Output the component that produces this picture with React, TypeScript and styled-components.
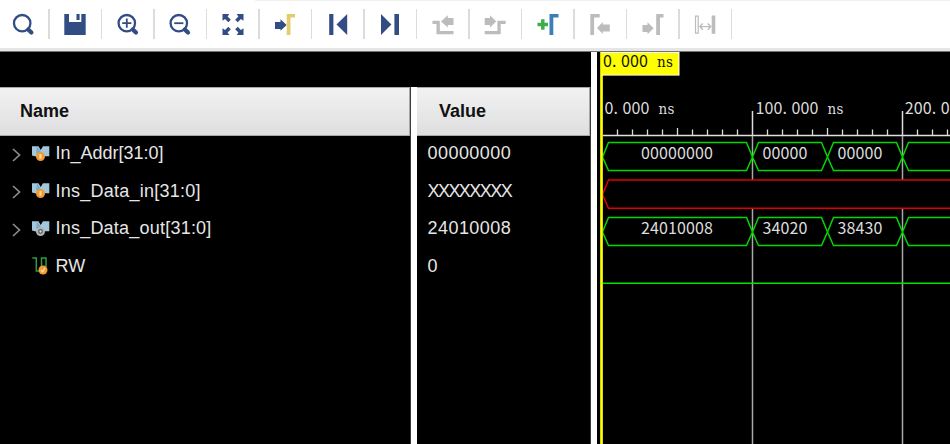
import React from "react";
import styled, { createGlobalStyle } from "styled-components";

const GlobalStyle = createGlobalStyle`
  html, body { margin: 0; padding: 0; background: #000; overflow: hidden; }
  * { box-sizing: border-box; }
`;

const NAVY = "#324d84";
const GRAY = "#bcbcbc";

const Page = styled.div`
  width: 950px;
  height: 444px;
  display: flex;
  flex-direction: column;
  background: #000;
  font-family: "Liberation Sans", Arial, sans-serif;
`;

const Toolbar = styled.div`
  height: 52px;
  flex: none;
  display: flex;
  flex-direction: column;
  background: #fff;
  border-bottom: 1px solid #747474;
`;

const TopEdge = styled.div`
  height: 1px;
  margin-left: 255px;
  background: #f0f0f0;
`;

const ToolRow = styled.div`
  height: 47px;
  display: flex;
  align-items: center;
  padding: 0 0 1px 10.5px;
`;

const BottomEdge = styled.div`
  height: 3px;
  background: #e6e6e6;
`;

const ToolButton = styled.button`
  border: 0;
  padding: 0;
  background: none;
  width: 24px;
  height: 24px;
  display: block;
  flex: none;
  svg { display: block; }
`;

const Divider = styled.span`
  width: 1.5px;
  height: 30px;
  margin: 0 13.5px;
  background: #dcdcdc;
  flex: none;
`;

const Workspace = styled.div`
  flex: 1;
  min-height: 0;
  display: flex;
`;

const SignalPane = styled.div`
  width: 591px;
  display: flex;
  flex-direction: column;
  flex: none;
`;

const Columns = styled.div`
  flex: 1;
  margin-top: 35px;
  display: flex;
`;

const Column = styled.div<{ $width: number }>`
  width: ${(p) => p.$width}px;
  flex: none;
  border-right: 1px solid #3c3c3c;
`;

const Splitter = styled.div`
  width: 6px;
  flex: none;
  background: #fff;
`;

const Header = styled.div<{ $indent: number }>`
  height: 49px;
  padding: 0 0 0 ${(p) => p.$indent}px;
  display: flex;
  align-items: center;
  background: linear-gradient(#f2f2f2, #dedee0);
  border: 1px solid #a8a8a8;
  border-left: 0;
  color: #111;
  font-size: 18px;
  font-weight: bold;
`;

const Row = styled.div<{ $indent: number }>`
  height: 37.5px;
  padding: 0 0 2px ${(p) => p.$indent}px;
  display: flex;
  align-items: center;
  color: #e6e6e6;
  font-size: 18px;
  white-space: pre;
`;

const Caret = styled.span`
  width: 20px;
  height: 20px;
  flex: none;
  svg { display: block; }
`;

const Glyph = styled.span`
  width: 23.5px;
  height: 20px;
  flex: none;
  svg { display: block; }
`;

const Label = styled.span<{ $spacing: number }>`
  letter-spacing: ${(p) => p.$spacing}px;
`;

const WavePane = styled.div`
  width: 353px;
  height: 392px;
  flex: none;
  svg { display: block; }
`;

const Bracket = ({ x, r, c }: { x: number; r: number; c: string }) => (
  <path d={`M${x} 2H${r}V5.6H${x + 3.8}V23H${x}Z`} fill={c} />
);

const icons: { name: string; art: React.ReactNode }[] = [
  {
    name: "Search",
    art: (
      <g fill="none" stroke={NAVY}>
        <circle cx="11.2" cy="11.2" r="8.2" strokeWidth="2.3" />
        <path d="M17.2 17.4L20.4 20.6" strokeWidth="4.2" strokeLinecap="round" />
      </g>
    ),
  },
  {
    name: "Save",
    art: <path d="M1.3 2H6V10H18.3V2H22.7V23H1.3ZM13.5 2H16.6V8H13.5Z" fill={NAVY} />,
  },
  {
    name: "Zoom in",
    art: (
      <g fill="none" stroke={NAVY}>
        <circle cx="10.8" cy="11.2" r="8.2" strokeWidth="2.3" />
        <path d="M16.8 17.4L20 20.6" strokeWidth="4.2" strokeLinecap="round" />
        <path d="M6.2 11.2H15.4M10.8 6.6V15.8" strokeWidth="1.8" />
      </g>
    ),
  },
  {
    name: "Zoom out",
    art: (
      <g fill="none" stroke={NAVY}>
        <circle cx="10.8" cy="11.2" r="8.2" strokeWidth="2.3" />
        <path d="M16.8 17.4L20 20.6" strokeWidth="4.2" strokeLinecap="round" />
        <path d="M6.2 11.2H15.4" strokeWidth="1.8" />
      </g>
    ),
  },
  {
    name: "Zoom fit",
    art: (
      <g fill={NAVY}>
        {[0, 90, 180, 270].map((a) => (
          <path
            key={a}
            transform={`rotate(${a} 12 12.5)`}
            d="M1.5 2H8.3L6.6 4.6L9.8 7.8L7.3 10.3L4.1 7.1L1.5 8.8Z"
          />
        ))}
      </g>
    ),
  },
  {
    name: "Go to cursor",
    art: (
      <>
        <path d="M2 10H7.5V7.2L13.7 13L7.5 18.8V17H2Z" fill={NAVY} />
        <Bracket x={13.7} r={22} c="#e3cd6a" />
      </>
    ),
  },
  { name: "Go to start", art: <path d="M3.2 2H7.4V23H3.2ZM21.2 2V23L10.5 12.5Z" fill={NAVY} /> },
  { name: "Go to end", art: <path d="M3 2L13.4 12.5L3 23ZM16.4 2H21V23H16.4Z" fill={NAVY} /> },
  {
    name: "Previous transition",
    art: (
      <path
        fill={GRAY}
        d="M1.5 8.8H8.8V19H22.5V22.3H5.5V12H1.5ZM10 9.4L16.8 3.2V6H22.5V13H16.8V15.6Z"
      />
    ),
  },
  {
    name: "Next transition",
    art: (
      <path
        fill={GRAY}
        d="M22.7 8.8H14.4V19H1.7V22.3H17.7V12H22.7ZM13.2 9.4L7 3.2V6H1.7V13H7V15.6Z"
      />
    ),
  },
  {
    name: "Add marker",
    art: (
      <>
        <path d="M1.5 12.5H12M6.8 7.2V17.8" stroke="#3fae49" strokeWidth="3.5" />
        <Bracket x={13.5} r={22.5} c="#3a7fb8" />
      </>
    ),
  },
  {
    name: "Previous marker",
    art: (
      <>
        <Bracket x={2.3} r={11.7} c={GRAY} />
        <path d="M9 16L14.8 10V12.6H21.8V19.6H14.8V22Z" fill={GRAY} />
      </>
    ),
  },
  {
    name: "Next marker",
    art: (
      <>
        <path d="M1.5 12.9H6.5V10.3L12.7 16.3L6.5 22.3V19.9H1.5Z" fill={GRAY} />
        <Bracket x={15.2} r={22.5} c={GRAY} />
      </>
    ),
  },
  {
    name: "Swap cursors",
    art: (
      <g fill="none" stroke={GRAY}>
        <path d="M2.5 4.2H5.2V21.2H2.5Z" strokeWidth="1.2" />
        <path d="M20.5 3.5V21.8" strokeWidth="3.6" />
        <path d="M6.8 14.6H17.8M9.8 11.4L6.8 14.6L9.8 17.8M14.8 11.4L17.8 14.6L14.8 17.8" strokeWidth="1.4" />
      </g>
    ),
  },
];

type Kind = "in" | "out" | "bit";

const SignalIcon = ({ kind }: { kind: Kind }) => (
  <svg width="23.5" height="20" viewBox="0 0 23.5 20">
    {kind === "bit" ? (
      <path d="M0.3 2H4.3V15H9.5V2H14V11" fill="none" stroke="#2f9b45" strokeWidth="1.5" />
    ) : (
      <>
        <path d="M0 2.3H6.5L8.7 6L11 2.3H17.3V12.3H12L8.7 9L5 12.8L0 11.5Z" fill="#a3c8dc" />
        <path d="M5 2.3L8.7 7.5L6 10.5L4 9Z" fill="#7fa8c2" />
      </>
    )}
    <circle
      cx={kind === "bit" ? 11 : 8.5}
      cy={kind === "bit" ? 14 : 12.5}
      r="4.5"
      fill={kind === "out" ? "#b2b4b7" : "#f29a33"}
    />
    {kind === "in" && <path d="M8.5 10V14.6" stroke="#ffe0ac" strokeWidth="2" fill="none" />}
    {kind === "out" && <circle cx="8.5" cy="12.5" r="1.8" stroke="#595e63" strokeWidth="1.3" fill="#ddd" />}
    {kind === "bit" && <path d="M9 14.2L10.7 15.7L13 12" stroke="#ffe0ac" strokeWidth="1.4" fill="none" />}
  </svg>
);

const signals: { name: string; value: string; kind: Kind; gap: number; vgap: number }[] = [
  { name: "In_Addr[31:0]", value: "00000000", kind: "in", gap: 0, vgap: 0.45 },
  { name: "Ins_Data_in[31:0]", value: "XXXXXXXX", kind: "in", gap: 0.25, vgap: -1.55 },
  { name: "Ins_Data_out[31:0]", value: "24010008", kind: "out", gap: 0.22, vgap: 0.45 },
  { name: "RW", value: "0", kind: "bit", gap: 0, vgap: 0 },
];

const CELL = 9;

/* Fixed-pitch text: every character starts on a 9px cell. */
const Mono = ({ x, y, text, color = "#dcdcdc" }: { x: number; y: number; text: string; color?: string }) => (
  <text
    y={y}
    x={[...text].map((_, i) => x + i * CELL).join(" ")}
    fill={color}
    fontSize="16"
    fontFamily='"Noto Sans CJK SC", sans-serif'
  >
    {[...text].map((c, i) =>
      /[a-z]/.test(c) ? (
        <tspan key={i} fontSize="15" fontFamily='"DejaVu Serif Condensed", "DejaVu Serif", serif'>
          {c}
        </tspan>
      ) : (
        c
      )
    )}
  </text>
);

const edges = [602.5, 752.5, 827.5, 902.5, 980];

const Bus = ({ top, values }: { top: number; values: string[] }) => {
  const bottom = top + 28;
  const mid = top + 14.5;
  return (
    <>
      {edges.slice(0, -1).map((s, i) => {
        const e = edges[i + 1];
        return (
          <React.Fragment key={s}>
            <path
              d={`M${s} ${mid}L${s + 6} ${top}H${e - 6}L${e} ${mid}L${e - 6} ${bottom}H${s + 6}Z`}
              fill="#000"
              stroke="#00d800"
              strokeWidth="1.5"
            />
            {values[i] && (
              <Mono x={values[i].length === 8 ? 641 : s + 10} y={top + 16} text={values[i]} />
            )}
          </React.Fragment>
        );
      })}
    </>
  );
};

const Waveform = () => (
  <svg width="353" height="392" viewBox="597 52 353 392">
    <rect x="597" y="52" width="353" height="392" fill="#000" />
    <path d="M603 135.5H950" stroke="#e0e0e0" strokeWidth="1.4" />
    {Array.from({ length: 23 }, (_, i) => i + 1)
      .filter((i) => i % 10 !== 0)
      .map((i) => (
        <path
          key={i}
          d={`M${602.5 + i * 15} ${i % 5 === 0 ? 128 : 129.5}V135`}
          stroke="#dcdcdc"
          strokeWidth="1.3"
        />
      ))}
    {[752.5, 902.5].map((x) => (
      <g key={x} strokeWidth="1.5">
        <path d={`M${x} 111V136`} stroke="#dcdcdc" />
        <path d={`M${x} 136V444`} stroke="#a8a8a8" />
      </g>
    ))}
    <Mono x={604.5} y={114.3} text="0.000 ns" />
    <Mono x={755.5} y={114.3} text="100.000 ns" />
    <Mono x={904.7} y={114.3} text="200.0" />
    <Bus top={142.5} values={["00000000", "00000", "00000"]} />
    <path d="M960 180H608.5L602.5 194.5L608.5 208.3H960Z" fill="#000" stroke="#e00000" strokeWidth="1.5" />
    <Bus top={217.5} values={["24010008", "34020", "38430"]} />
    <path d="M603 283.3H950" stroke="#00e400" strokeWidth="1.5" />
    <path d="M601.5 52V444" stroke="#d6d600" strokeWidth="3" />
    <path d="M601.5 52V444" stroke="#ffff00" strokeWidth="1" />
    <rect x="601" y="52" width="78.5" height="23.6" fill="#fff" />
    <rect x="601" y="53" width="77.5" height="21.8" fill="#ffff00" />
    <Mono x={603} y={66.7} text="0.000 ns" color="#111" />
  </svg>
);

export default function App() {
  return (
    <Page>
      <GlobalStyle />
      <Toolbar>
        <TopEdge />
        <ToolRow>
          {icons.map((icon) => (
            <React.Fragment key={icon.name}>
              <ToolButton aria-label={icon.name}>
                <svg width="24" height="24" viewBox="0 0 24 24">
                  {icon.art}
                </svg>
              </ToolButton>
              <Divider />
            </React.Fragment>
          ))}
        </ToolRow>
        <BottomEdge />
      </Toolbar>
      <Workspace>
        <SignalPane>
          <Columns>
            <Column $width={411}>
              <Header $indent={20}>Name</Header>
              {signals.map((s) => (
                <Row key={s.name} $indent={12}>
                  <Caret>
                    {s.kind !== "bit" && (
                      <svg width="20" height="20" viewBox="0 0 20 20">
                        <path d="M1 5L7.5 11L1 17" fill="none" stroke="#8c8c8c" strokeWidth="1.7" />
                      </svg>
                    )}
                  </Caret>
                  <Glyph>
                    <SignalIcon kind={s.kind} />
                  </Glyph>
                  <Label $spacing={s.gap}>{s.name}</Label>
                </Row>
              ))}
            </Column>
            <Splitter />
            <Column $width={174}>
              <Header $indent={22}>Value</Header>
              {signals.map((s) => (
                <Row key={s.name} $indent={10.5}>
                  <Label $spacing={s.vgap}>{s.value}</Label>
                </Row>
              ))}
            </Column>
          </Columns>
        </SignalPane>
        <Splitter />
        <WavePane>
          <Waveform />
        </WavePane>
      </Workspace>
    </Page>
  );
}
